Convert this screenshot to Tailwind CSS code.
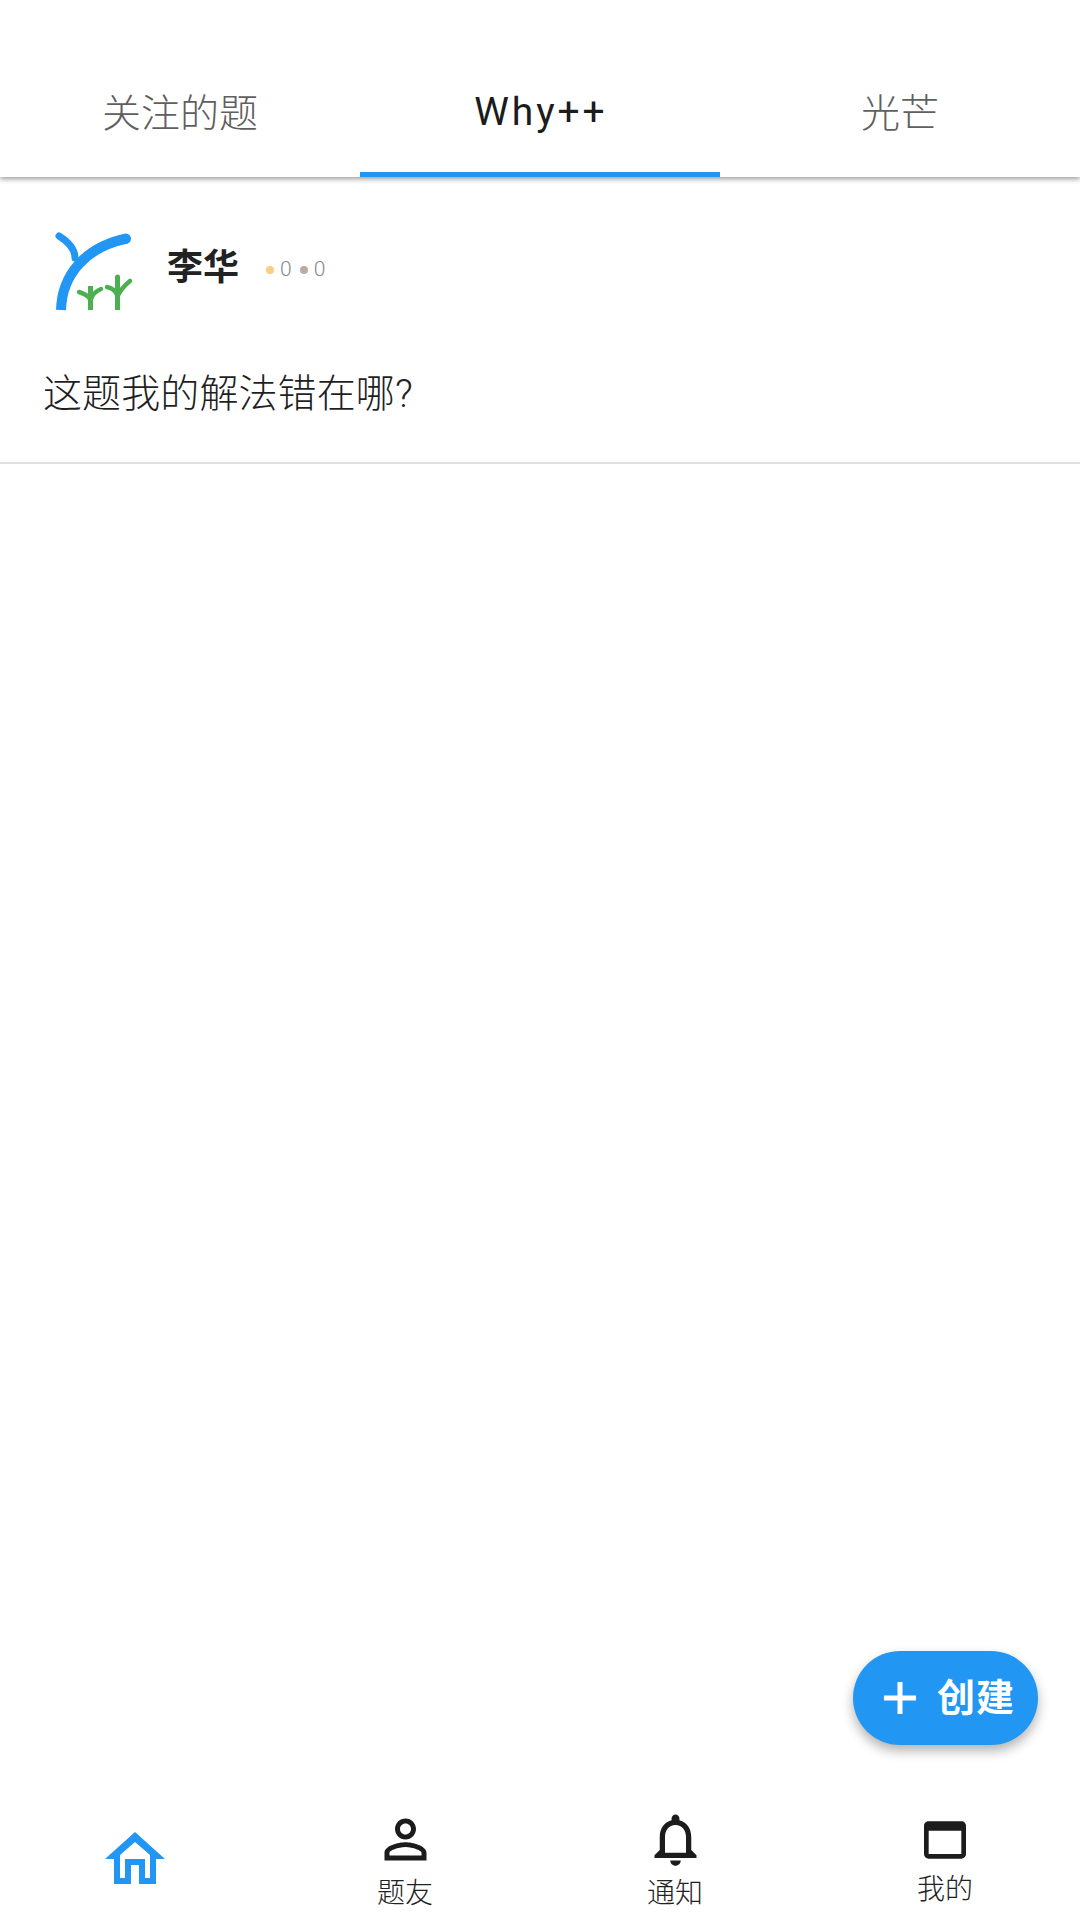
<!DOCTYPE html>
<html lang="zh">
<head>
  <meta charset="UTF-8">
  <meta name="viewport" content="width=device-width, initial-scale=1.0">
  <title>Why++</title>
  <script src="https://cdn.jsdelivr.net/npm/@tailwindcss/browser@4"></script>
</head>
<body class="bg-white font-['Roboto','Noto_Sans_CJK_SC',sans-serif]">
  <div class="relative flex flex-col w-[1080px] h-[1920px] overflow-hidden">

    <!-- tabs -->
    <header class="grid grid-cols-3 h-[177px] pt-[52px] bg-white shadow-[0_2px_5px_rgba(0,0,0,0.4)] text-[39px] font-light text-[#5f5f5f]">
      <div class="flex items-center justify-center">关注的题</div>
      <div class="flex items-center justify-center pl-[2px] border-b-[5px] border-[#2196f3] font-normal text-[#1c1c1c] tracking-[2.900px]">Why++</div>
      <div class="flex items-center justify-center">光芒</div>
    </header>

    <!-- post -->
    <main class="flex-1">
      <article class="h-[287px] pt-[53px] pl-[50px] border-b-2 border-[#e0e0e0]">
        <div class="flex items-start h-[85px]">
          <svg class="w-[85px] h-[85px]" viewBox="50 230 85 85" fill="none">
            <path d="M61 310C62 275 85 247 127 238.500" stroke="#2196f3" stroke-width="10"/>
            <circle cx="126" cy="238.700" r="5" fill="#2196f3"/>
            <path d="M59 236C67 241 75 248 75 258" stroke="#2196f3" stroke-width="7" stroke-linecap="round"/>
            <path d="M90.500 310V286" stroke="#4caf50" stroke-width="5"/>
            <path d="M117.500 310V279" stroke="#4caf50" stroke-width="5"/>
            <path d="M117.500 279v-2" stroke="#4caf50" stroke-width="5" stroke-linecap="round"/>
            <path d="M79 292C85 294 89 296 90.500 300M101 289C96 291 92 295 90.500 300M107 287C112 288 116 291 117.500 296M130 281C125 285 120 291 117.500 296" stroke="#4caf50" stroke-width="4.500" stroke-linecap="round"/>
          </svg>
          <span class="ml-[32px] mt-[20px] text-[36px] leading-none font-bold text-[#222222]">李华</span>
          <div class="flex items-center ml-[27px] mt-[29px] text-[21px] leading-none font-light text-[#8a8a8a]">
            <span class="w-[8px] h-[8px] rounded-full bg-[#ffcc80]"></span>
            <span class="ml-[6px]">0</span>
            <span class="ml-[8px] w-[8px] h-[8px] rounded-full bg-[#bcaaa4]"></span>
            <span class="ml-[6px]">0</span>
          </div>
        </div>
        <p class="mt-[51px] -ml-[7px] text-[39px] tracking-[0.100px] leading-[56px] font-light text-[#1f1f1f]">这题我的解法错在哪?</p>
      </article>
    </main>

    <!-- create button -->
    <button class="absolute left-[853px] top-[1651px] flex items-center w-[185px] h-[94px] pl-[31px] rounded-full bg-[#2196f3] text-white shadow-[0_6px_12px_rgba(0,0,0,0.3)]">
      <svg class="w-[32px] h-[32px]" viewBox="0 0 32 32" fill="#ffffff"><path d="M0 13.500h32v5H0zM13.500 0h5v32h-5z"/></svg>
      <span class="ml-[21px] text-[38px] leading-none font-bold tracking-[1px]">创建</span>
    </button>

    <!-- bottom nav -->
    <nav class="grid grid-cols-4 h-[130px] text-[28px] leading-none font-light text-[#222222]">
      <div class="flex justify-center pt-[42px]">
        <svg class="w-[60px] h-[52px]" viewBox="0 0 60 52" fill="#2196f3">
          <path fill-rule="evenodd" d="M30 0L60 27H51V52H34V33H26V52H9V27H0ZM30 10L15 23V46H20V27H40V46H45V23Z"/>
        </svg>
      </div>
      <div class="flex flex-col items-center pt-[18px]">
        <svg class="w-[63px] h-[63px]" viewBox="0 0 24 24" fill="#1c1c1c">
          <path d="M12 5.900c1.160 0 2.100.940 2.100 2.100s-.940 2.100-2.100 2.100S9.900 9.160 9.900 8s.940-2.100 2.100-2.100m0 9c2.970 0 6.100 1.460 6.100 2.100v1.100H5.900V17c0-.640 3.130-2.100 6.100-2.100M12 4C9.790 4 8 5.790 8 8s1.790 4 4 4 4-1.790 4-4-1.790-4-4-4zm0 9c-2.670 0-8 1.340-8 4v3h16v-3c0-2.660-5.330-4-8-4z"/>
        </svg>
        <span class="mt-[9px]">题友</span>
      </div>
      <div class="flex flex-col items-center pt-[18px]">
        <svg class="w-[63px] h-[63px]" viewBox="0 0 24 24" fill="#1c1c1c">
          <path d="M12 22c1.100 0 2-.900 2-2h-4c0 1.100.900 2 2 2zm6-6v-5c0-3.070-1.630-5.640-4.500-6.320V4c0-.830-.670-1.500-1.500-1.500s-1.500.670-1.500 1.500v.680C7.640 5.360 6 7.920 6 11v5l-2 2v1h16v-1l-2-2zm-2 1H8v-6c0-2.480 1.510-4.500 4-4.500s4 2.020 4 4.500v6z"/>
        </svg>
        <span class="mt-[9px]">通知</span>
      </div>
      <div class="flex flex-col items-center pt-[22px]">
        <svg class="w-[56px] h-[56px]" viewBox="0 0 24 24" fill="#1c1c1c">
          <path d="M19 4H5c-1.110 0-2 .900-2 2v12c0 1.100.890 2 2 2h14c1.100 0 2-.900 2-2V6c0-1.100-.890-2-2-2zm0 14H5V8h14v10z"/>
        </svg>
        <span class="mt-[8px]">我的</span>
      </div>
    </nav>
  </div>
</body>
</html>
